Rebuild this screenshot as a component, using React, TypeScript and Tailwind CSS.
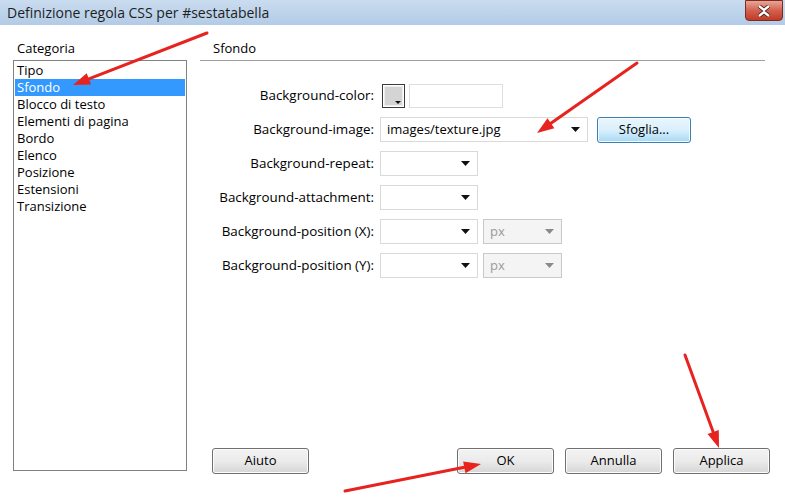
import React from "react";

const font = { fontFamily: '"Open Sans", "Liberation Sans", Arial, sans-serif' };

const categories = [
  "Tipo",
  "Sfondo",
  "Blocco di testo",
  "Elementi di pagina",
  "Bordo",
  "Elenco",
  "Posizione",
  "Estensioni",
  "Transizione",
];

function Caret({ disabled }: { disabled?: boolean }) {
  return (
    <svg width="9" height="5" viewBox="0 0 9 5" className="shrink-0">
      <path d="M0 0h9L4.5 5z" fill={disabled ? "#8a8a8a" : "#111"} />
    </svg>
  );
}

function Combo({
  w,
  value,
  disabled,
}: {
  w: string;
  value?: string;
  disabled?: boolean;
}) {
  return (
    <div
      className={`${w} h-[25px] flex items-center justify-between pl-[6px] pr-[7px] border ${
        disabled
          ? "bg-[#f4f4f4] border-[#c9c9c9] text-[#9a9a9a]"
          : "bg-white border-[#d9d9d9] text-black"
      }`}
    >
      <span className="text-[13px] leading-none">{value}</span>
      <Caret disabled={disabled} />
    </div>
  );
}

function Button({ label, w = "w-[97px]" }: { label: string; w?: string }) {
  return (
    <div
      className={`${w} h-[26px] flex items-center justify-center rounded-[3px] border border-[#707070] bg-gradient-to-b from-[#f3f3f3] via-[#ebebeb] to-[#d6d6d6] text-[13px] text-black shadow-[inset_0_0_0_1px_#fcfcfc]`}
    >
      {label}
    </div>
  );
}

function Arrow({ x1, y1, x2, y2 }: { x1: number; y1: number; x2: number; y2: number }) {
  const dx = x2 - x1;
  const dy = y2 - y1;
  const len = Math.hypot(dx, dy);
  const ux = dx / len;
  const uy = dy / len;
  const hl = 17;
  const hw = 6;
  const bx = x2 - ux * hl;
  const by = y2 - uy * hl;
  const p1 = `${bx - uy * hw},${by + ux * hw}`;
  const p2 = `${bx + uy * hw},${by - ux * hw}`;
  return (
    <g>
      <line x1={x1} y1={y1} x2={bx} y2={by} stroke="#e8231f" strokeWidth="3" strokeLinecap="round" />
      <polygon points={`${x2},${y2} ${p1} ${p2}`} fill="#e8231f" />
    </g>
  );
}

export default function App() {
  const rows: { label: string; control: React.ReactNode }[] = [
    {
      label: "Background-color:",
      control: (
        <div className="flex items-center gap-[4px]">
          <div className="ml-[2px] w-[23px] h-[24px] border border-[#3a3a3a] p-[1px] bg-white">
            <div className="relative w-full h-full bg-[#d4d4d4] border border-[#eeeeee]">
              <svg width="6" height="3" viewBox="0 0 6 3" className="absolute right-[1px] bottom-[1px]">
                <path d="M0 0h6L3 3z" fill="#111" />
              </svg>
            </div>
          </div>
          <div className="w-[94px] h-[24px] bg-white border border-[#dedede]" />
        </div>
      ),
    },
    {
      label: "Background-image:",
      control: (
        <div className="flex items-center gap-[9px]">
          <Combo w="w-[208px]" value="images/texture.jpg" />
          <div className="w-[94px] h-[26px] flex items-center justify-center rounded-[3px] border border-[#3c7fb1] bg-gradient-to-b from-[#eaf6fd] via-[#d9f0fc] to-[#a7d9f5] text-[13px] text-black shadow-[inset_0_0_0_1px_#f4fbfe]">
            Sfoglia...
          </div>
        </div>
      ),
    },
    { label: "Background-repeat:", control: <Combo w="w-[98px]" /> },
    { label: "Background-attachment:", control: <Combo w="w-[98px]" /> },
    {
      label: "Background-position (X):",
      control: (
        <div className="flex items-center gap-[5px]">
          <Combo w="w-[98px]" />
          <Combo w="w-[79px]" value="px" disabled />
        </div>
      ),
    },
    {
      label: "Background-position (Y):",
      control: (
        <div className="flex items-center gap-[5px]">
          <Combo w="w-[98px]" />
          <Combo w="w-[79px]" value="px" disabled />
        </div>
      ),
    },
  ];

  return (
    <div className="relative w-[785px] h-[498px] bg-white overflow-hidden text-black" style={font}>
      {/* title bar */}
      <div className="h-[25px] flex items-center justify-between bg-gradient-to-b from-[#cadcef] to-[#b2cbe6]">
        <span className="pl-[7px] text-[14px] text-[#1e1e1e]">Definizione regola CSS per #sestatabella</span>
        <div className="mr-[2px] self-start w-[38px] h-[21px] rounded-b-[4px] border border-[#7a2b22] bg-gradient-to-b from-[#e9a597] via-[#d2604e] to-[#c13a25] flex items-center justify-center">
          <svg width="14" height="12" viewBox="0 0 14 12">
            <path d="M2 1l5 4 5-4M2 11l5-4 5 4" stroke="#3b1410" strokeWidth="4" fill="none" />
            <path d="M2 1l5 4 5-4M2 11l5-4 5 4" stroke="#ffffff" strokeWidth="2.4" fill="none" />
          </svg>
        </div>
      </div>

      <div className="flex">
        {/* left column */}
        <div className="pl-[13px] pt-[15px] w-[200px]">
          <div className="pl-[4px] h-[16px] text-[13px] leading-[16px]">Categoria</div>
          <div className="mt-[4px] w-[174px] h-[411px] border border-[#828282] pt-[1px] px-[1px]">
            {categories.map((c) => (
              <div
                key={c}
                className={`h-[17px] pl-[2px] text-[13px] leading-[17px] ${
                  c === "Sfondo" ? "bg-[#3399ff] text-white" : ""
                }`}
              >
                {c}
              </div>
            ))}
          </div>
        </div>

        {/* right column */}
        <div className="pt-[15px] w-[585px]">
          <div className="pl-[13px] h-[16px] text-[13px] leading-[16px]">Sfondo</div>
          <div className="mt-[4px] w-[565px] border-t border-[#a0a0a0]" />
          <div className="mt-[22px] flex flex-col gap-[9px]">
            {rows.map((r) => (
              <div key={r.label} className="h-[25px] flex items-center">
                <div className="w-[174px] text-right text-[13.4px]">{r.label}</div>
                <div className="ml-[6px]">{r.control}</div>
              </div>
            ))}
          </div>
          <div className="mt-[170px] flex items-center">
            <div className="ml-[12px]">
              <Button label="Aiuto" />
            </div>
            <div className="ml-[148px] flex gap-[11px]">
              <Button label="OK" />
              <Button label="Annulla" />
              <Button label="Applica" />
            </div>
          </div>
        </div>
      </div>

      {/* annotation arrows */}
      <svg className="absolute inset-0 pointer-events-none" width="785" height="498">
        <Arrow x1={207} y1={33} x2={73} y2={85} />
        <Arrow x1={637} y1={63} x2={537} y2={133} />
        <Arrow x1={685} y1={355} x2={719} y2={448} />
        <Arrow x1={345} y1={491} x2={481} y2={464} />
      </svg>
    </div>
  );
}
